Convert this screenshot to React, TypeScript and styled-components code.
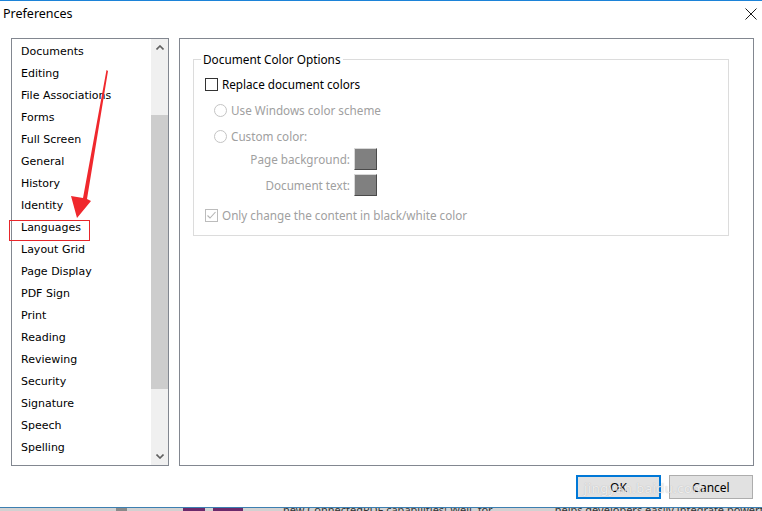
import React from 'react';
import styled, { createGlobalStyle } from 'styled-components';

const GlobalStyle = createGlobalStyle`
  html, body { margin: 0; padding: 0; background: #ffffff; }
  body { width: 762px; height: 511px; overflow: hidden; }
`;

const ui = `"Noto Sans", "Open Sans", sans-serif`;
const listFont = `"DejaVu Sans", Verdana, sans-serif`;

const categories = [
  'Documents', 'Editing', 'File Associations', 'Forms', 'Full Screen', 'General',
  'History', 'Identity', 'Languages', 'Layout Grid', 'Page Display', 'PDF Sign',
  'Print', 'Reading', 'Reviewing', 'Security', 'Signature', 'Speech', 'Spelling', 'Stamps',
];

const App = () => {
  return (
    <>
      <GlobalStyle />
      <Screen>
        <Window>
          <TitleBar>
            <Title>Preferences</Title>
            <CloseButton>
              <svg width="12" height="12" viewBox="0 0 12 12">
                <path d="M0.5 0.5 L11.5 11.5 M11.5 0.5 L0.5 11.5" stroke="#1a1a1a" strokeWidth="1" fill="none" />
              </svg>
            </CloseButton>
          </TitleBar>
          <Main>
            <ListBox>
              <Items>
                {categories.map(c => <Item key={c}>{c}</Item>)}
              </Items>
              <ScrollBar>
                <ScrollArrow>
                  <svg width="8" height="5" viewBox="0 0 8 5">
                    <path d="M0.5 4.5 L4 1 L7.5 4.5" stroke="#606060" strokeWidth="1.6" fill="none" />
                  </svg>
                </ScrollArrow>
                <Track>
                  <Thumb />
                </Track>
                <ScrollArrow>
                  <svg width="8" height="5" viewBox="0 0 8 5">
                    <path d="M0.5 0.5 L4 4 L7.5 0.5" stroke="#606060" strokeWidth="1.6" fill="none" />
                  </svg>
                </ScrollArrow>
              </ScrollBar>
            </ListBox>
            <Panel>
              <GroupBox>
                <GroupTitle>Document Color Options</GroupTitle>
                <Row>
                  <CheckBox />
                  <Label>Replace document colors</Label>
                </Row>
                <Row indent={9} gap={6}>
                  <Radio />
                  <Label disabled>Use Windows color scheme</Label>
                </Row>
                <Row indent={9} gap={6}>
                  <Radio />
                  <Label disabled>Custom color:</Label>
                </Row>
                <ColorRow gap={2}>
                  <ColorLabel>Page background:</ColorLabel>
                  <Swatch />
                </ColorRow>
                <ColorRow gap={4}>
                  <ColorLabel>Document text:</ColorLabel>
                  <Swatch />
                </ColorRow>
                <Row gap={9}>
                  <CheckBox disabled>
                    <svg width="11" height="11" viewBox="0 0 11 11">
                      <path d="M1.5 5.5 L4 8 L9.5 2" stroke="#b4b4b4" strokeWidth="1.1" fill="none" />
                    </svg>
                  </CheckBox>
                  <Label disabled>Only change the content in black/white color</Label>
                </Row>
              </GroupBox>
            </Panel>
          </Main>
          <Footer>
            <Button primary>OK</Button>
            <Button>Cancel</Button>
            <Watermark>jingyan.baidu.com</Watermark>
          </Footer>
          <Annotation width="762" height="507" viewBox="0 0 762 507">
            <rect x="9.5" y="220.5" width="80" height="20" fill="none" stroke="#e8262b" strokeWidth="1" />
            <polygon points="106.5,70 108,71 87,199 91,201 77,218 71,196 83,198" fill="#f0282d" />
          </Annotation>
        </Window>
        <Behind>
          <Block w={116} color="#d2d2d2" />
          <Block w={11} color="#8a8a8a" />
          <Block w={56} color="#d2d2d2" />
          <Block w={22} color="#6b2a6b" />
          <Block w={8} color="#d2d2d2" />
          <Block w={30} color="#6b2a6b" />
          <Block w={40} color="#d2d2d2" />
          <BehindText>new ConnectedPDF capabilities! Well, for</BehindText>
          <BehindText>helps developers easily integrate powerful PDF</BehindText>
        </Behind>
      </Screen>
    </>
  );
};

export default App;

const Screen = styled.div`
  width: 762px;
  height: 511px;
  display: flex;
  flex-direction: column;
  overflow: hidden;
`;

const Window = styled.div`
  position: relative;
  height: 506px;
  border-top: 1px solid #1c83d8;
  background: #ffffff;
  display: flex;
  flex-direction: column;
`;

const TitleBar = styled.div`
  height: 25px;
  display: flex;
  align-items: center;
  justify-content: space-between;
  padding: 0 4px 0 3px;
`;

const Title = styled.span`
  font-family: ${ui};
  font-size: 12.5px;
  color: #000;
`;

const CloseButton = styled.div`
  width: 14px;
  height: 14px;
  display: flex;
  align-items: center;
  justify-content: center;
  margin-top: 1px;
`;

const Main = styled.div`
  display: flex;
  gap: 10px;
  padding: 12px 8px 0 11px;
`;

const ListBox = styled.div`
  width: 156px;
  height: 426px;
  border: 1px solid #828790;
  display: flex;
  overflow: hidden;
`;

const Items = styled.div`
  flex: 1;
  padding: 2px 0 0 9px;
  display: flex;
  flex-direction: column;
`;

const Item = styled.div`
  height: 22px;
  line-height: 22px;
  flex-shrink: 0;
  font-family: ${listFont};
  font-size: 11px;
  color: #000;
  white-space: nowrap;
`;

const ScrollBar = styled.div`
  width: 17px;
  background: #f0f0f0;
  display: flex;
  flex-direction: column;
`;

const ScrollArrow = styled.div`
  height: 17px;
  display: flex;
  align-items: center;
  justify-content: center;
`;

const Track = styled.div`
  flex: 1;
  padding-top: 59px;
`;

const Thumb = styled.div`
  height: 274px;
  background: #cdcdcd;
`;

const Panel = styled.div`
  border: 1px solid #828790;
  padding: 20px 24px 0 13px;
  box-sizing: content-box;
  width: 536px;
  height: 406px;
`;

const GroupBox = styled.div`
  position: relative;
  border: 1px solid #dcdcdc;
  padding: 14px 0 10px 11px;
  display: flex;
  flex-direction: column;
`;

const GroupTitle = styled.span`
  position: absolute;
  top: -10px;
  left: 7px;
  padding: 0 2px;
  background: #ffffff;
  font-family: ${ui};
  font-size: 11.8px;
  line-height: 18px;
  color: #000;
`;

const Row = styled.div<{ indent?: number; gap?: number }>`
  height: 20px;
  display: flex;
  align-items: center;
  gap: 4px;
  padding-left: ${p => p.indent || 0}px;
  margin-top: ${p => p.gap || 0}px;
`;

const Label = styled.span<{ disabled?: boolean }>`
  font-family: ${ui};
  font-size: 11.7px;
  color: ${p => (p.disabled ? '#a0a0a0' : '#000')};
  white-space: nowrap;
`;

const CheckBox = styled.div<{ disabled?: boolean }>`
  width: 11px;
  height: 11px;
  border: 1px solid ${p => (p.disabled ? '#bcbcbc' : '#333333')};
  background: #ffffff;
  display: flex;
  align-items: center;
  justify-content: center;
`;

const Radio = styled.div`
  width: 11px;
  height: 11px;
  border: 1px solid #c4c4c4;
  border-radius: 50%;
  background: #ffffff;
`;

const ColorRow = styled.div<{ gap: number }>`
  height: 22px;
  display: flex;
  align-items: center;
  margin-top: ${p => p.gap}px;
`;

const ColorLabel = styled.span`
  width: 145px;
  text-align: right;
  margin-right: 4px;
  font-family: ${ui};
  font-size: 11.7px;
  color: #a0a0a0;
  white-space: nowrap;
`;

const Swatch = styled.div`
  width: 21px;
  height: 20px;
  background: #808080;
  border: 1px solid;
  border-color: #d8d8d8 #4a4a4a #4a4a4a #d8d8d8;
`;

const Footer = styled.div`
  position: relative;
  display: flex;
  justify-content: flex-end;
  gap: 8px;
  padding: 9px 9px 0 0;
`;

const Button = styled.div<{ primary?: boolean }>`
  width: ${p => (p.primary ? '81px' : '82px')};
  height: ${p => (p.primary ? '20px' : '22px')};
  border: ${p => (p.primary ? '2px solid #0078d7' : '1px solid #adadad')};
  background: #e1e1e1;
  display: flex;
  align-items: center;
  justify-content: center;
  font-family: ${ui};
  font-size: 12px;
  color: #000;
`;

const Watermark = styled.span`
  position: absolute;
  left: 584px;
  top: 13px;
  font-family: ${ui};
  font-size: 13px;
  letter-spacing: 0.5px;
  color: rgba(255, 255, 255, 0.75);
  text-shadow: 0 0 1px rgba(120, 120, 120, 0.5);
  pointer-events: none;
`;

const Annotation = styled.svg`
  position: absolute;
  left: 0;
  top: -1px;
  pointer-events: none;
`;

const Behind = styled.div`
  flex: 1;
  border-top: 1px solid #3c7fb1;
  background: #d2d2d2;
  display: flex;
  overflow: hidden;
`;

const Block = styled.div<{ w: number; color: string }>`
  width: ${p => p.w}px;
  flex-shrink: 0;
  background: ${p => p.color};
`;

const BehindText = styled.span`
  margin-top: -6px;
  margin-right: 62px;
  font-family: ${ui};
  font-size: 11px;
  color: #333;
  white-space: nowrap;
`;
